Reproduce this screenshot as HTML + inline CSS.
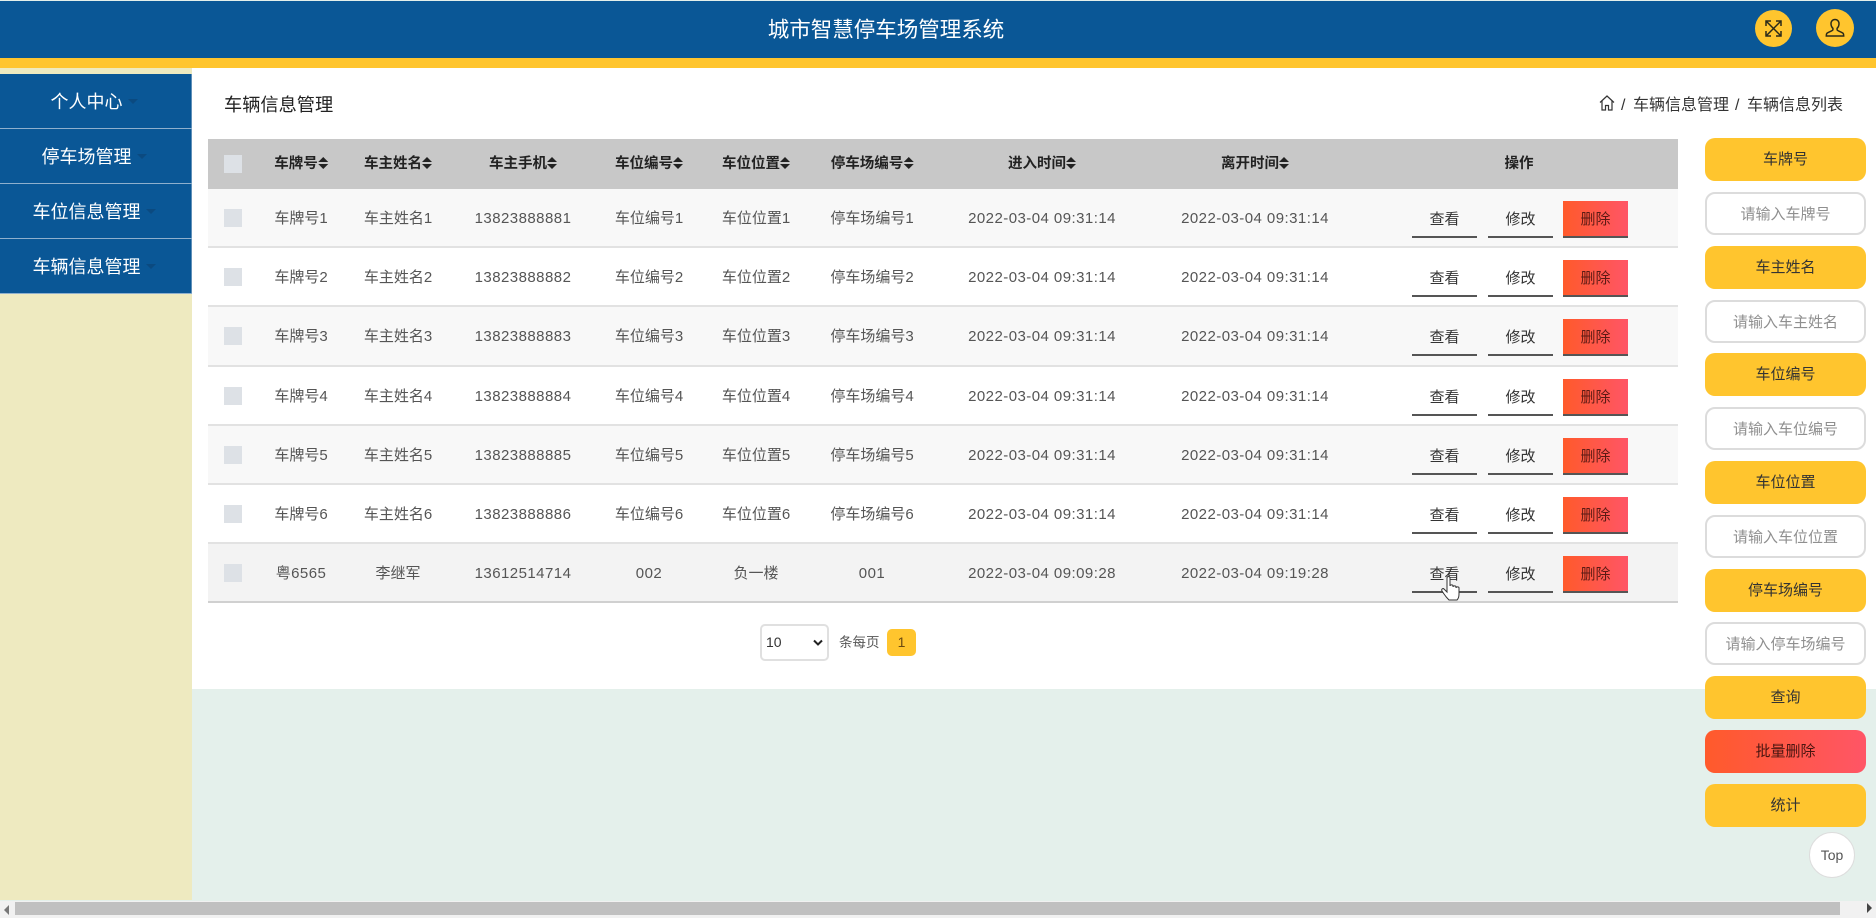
<!DOCTYPE html>
<html lang="zh">
<head>
<meta charset="utf-8">
<title>城市智慧停车场管理系统</title>
<style>
html,body{margin:0;padding:0;width:1876px;height:918px;overflow:hidden;background:#e4f0eb;font-family:"Liberation Sans","Noto Sans CJK SC",sans-serif;color:#333}
*{box-sizing:border-box}
.a{position:absolute}
.hd{left:0;top:1px;width:1876px;height:57px;background:#0a5796}
.yl{left:0;top:58px;width:1876px;height:10px;background:#ffc52e}
.title{left:0;top:15px;width:1772px;text-align:center;color:#fff;font-size:21.5px;line-height:30px}
.circ{border-radius:50%;background:#ffc52e;display:flex;align-items:center;justify-content:center}
.side{left:0;top:68px;width:192px;height:832px;background:#eeeac0}
.mi{left:0;width:192px;height:54px;background:#0a5796;color:#fff;font-size:18px;line-height:56px;text-align:center;border-right:1px solid #5f8fb8;padding-right:18px}
.mi i{position:absolute;width:0;height:0;border:5px solid transparent;border-top:5px solid #0b4a80;border-bottom:0;top:25px}
.sep{left:0;width:192px;height:1px;background:#8fb0cd}
.main{left:192px;top:68px;width:1684px;height:621px;background:#fff}
.h1{left:224px;top:91px;font-size:18.2px;line-height:28px;color:#222}
.bc{top:93px;font-size:16px;line-height:26px;color:#333;white-space:nowrap}
.thr{left:208px;top:139px;width:1470px;height:50px;background:#c8c8c8}
.r{left:208px;width:1470px;border-bottom:2px solid #e2e2e2}
.r .c,.thr .c{position:absolute;top:0;text-align:center;white-space:nowrap;font-size:15px;transform:translateX(-50%)}
.r .c{line-height:60px;color:#555}
.r .n{letter-spacing:.45px}
.thr .c{line-height:51px;font-weight:bold;color:#222;font-size:14.5px}
.cb{position:absolute;left:16px;width:18px;height:18px;background:#dde1e6;top:20px}
.thr .cb{top:16px}
.s{display:inline-block;width:10px;height:12px;position:relative;vertical-align:-1px;margin-left:0}
.s:before,.s:after{content:"";position:absolute;left:0;border:5px solid transparent}
.s:before{top:0;border-bottom:5px solid #222;border-top:0}
.s:after{bottom:0;border-top:5px solid #222;border-bottom:0}
.b{position:absolute;top:12px;height:37px;width:65px;text-align:center;line-height:37px;font-size:15px;color:#333;border-bottom:2px solid #555}
.b1{left:1204px}.b2{left:1280px}
.b3{left:1355px;background:linear-gradient(90deg,#ff5a2b,#ff5566);color:#5b1a14}
.pb{left:1705px;width:161px;height:43px;border-radius:10px;background:#ffc52e;text-align:center;line-height:44px;font-size:15px;color:#333}
.pi{left:1705px;width:161px;height:43px;border-radius:10px;background:#fff;border:2px solid #dcdcdc;text-align:center;line-height:41px;font-size:15px;color:#8f8f8f}
.red{background:linear-gradient(90deg,#ff5a2b,#ff5566);color:#4a1510}
</style>
</head>
<body>
<div class="a hd"></div>
<div class="a yl"></div>
<div class="a title">城市智慧停车场管理系统</div>
<div class="a circ" style="left:1755px;top:10px;width:37px;height:37px">
<svg width="19" height="19" viewBox="0 0 19 19" fill="none" stroke="#2a2a1a" stroke-width="1.5"><path d="M2 2L17 17M17 2L2 17"/><path d="M2 7V2H7M12 2H17V7M17 12V17H12M7 17H2V12"/></svg>
</div>
<div class="a circ" style="left:1816px;top:9px;width:38px;height:38px">
<svg width="20" height="20" viewBox="0 0 20 20" fill="none" stroke="#2a2a1a" stroke-width="1.5"><path d="M10 1.500c-2.600 0-4 2-4 4.200 0 2 .9 3.600 1.900 4.600v1.600c0 1-4.400 1.800-6 3.400-.6.700-.6 1.500-.6 2.700h17.400c0-1.200 0-2-.6-2.700-1.600-1.600-6-2.400-6-3.400v-1.600c1-1 1.900-2.600 1.900-4.600 0-2.200-1.400-4.200-4-4.200z"/></svg>
</div>

<div class="a side"></div>
<div class="a mi" style="top:74px">个人中心<i style="left:128px"></i></div>
<div class="a sep" style="top:128px"></div>
<div class="a mi" style="top:129px">停车场管理<i style="left:137px"></i></div>
<div class="a sep" style="top:183px"></div>
<div class="a mi" style="top:184px">车位信息管理<i style="left:146px"></i></div>
<div class="a sep" style="top:238px"></div>
<div class="a mi" style="top:239px">车辆信息管理<i style="left:146px"></i></div>
<div class="a sep" style="top:293px"></div>

<div class="a main"></div>
<div class="a h1">车辆信息管理</div>
<svg class="a" style="left:1599px;top:95px" width="16" height="16" viewBox="0 0 16 16" fill="none" stroke="#333" stroke-width="1.200"><path d="M1 7.500L8 1l7 6.500M3 6v9h3.500v-4.500h3V15H13V6"/></svg>
<div class="a bc" style="left:1621px">/</div>
<div class="a bc" style="left:1633px">车辆信息管理</div>
<div class="a bc" style="left:1735px">/</div>
<div class="a bc" style="left:1747px">车辆信息列表</div>

<div class="a thr">
<span class="cb"></span>
<span class="c" style="left:93px">车牌号<span class="s"></span></span>
<span class="c" style="left:190px">车主姓名<span class="s"></span></span>
<span class="c" style="left:315px">车主手机<span class="s"></span></span>
<span class="c" style="left:441px">车位编号<span class="s"></span></span>
<span class="c" style="left:548px">车位位置<span class="s"></span></span>
<span class="c" style="left:664px">停车场编号<span class="s"></span></span>
<span class="c" style="left:834px">进入时间<span class="s"></span></span>
<span class="c" style="left:1047px">离开时间<span class="s"></span></span>
<span class="c" style="left:1311px">操作</span>
</div>

<div class="a r" style="top:189px;height:59px;background:#f8f8f8">
<span class="cb"></span><span class="c" style="left:93px">车牌号1</span><span class="c" style="left:190px">车主姓名1</span><span class="c n" style="left:315px">13823888881</span><span class="c" style="left:441px">车位编号1</span><span class="c" style="left:548px">车位位置1</span><span class="c" style="left:664px">停车场编号1</span><span class="c n" style="left:834px">2022-03-04 09:31:14</span><span class="c n" style="left:1047px">2022-03-04 09:31:14</span>
<span class="b b1">查看</span><span class="b b2">修改</span><span class="b b3">删除</span>
</div>
<div class="a r" style="top:248px;height:59px;background:#fff">
<span class="cb"></span><span class="c" style="left:93px">车牌号2</span><span class="c" style="left:190px">车主姓名2</span><span class="c n" style="left:315px">13823888882</span><span class="c" style="left:441px">车位编号2</span><span class="c" style="left:548px">车位位置2</span><span class="c" style="left:664px">停车场编号2</span><span class="c n" style="left:834px">2022-03-04 09:31:14</span><span class="c n" style="left:1047px">2022-03-04 09:31:14</span>
<span class="b b1">查看</span><span class="b b2">修改</span><span class="b b3">删除</span>
</div>
<div class="a r" style="top:307px;height:60px;background:#f8f8f8">
<span class="cb"></span><span class="c" style="left:93px">车牌号3</span><span class="c" style="left:190px">车主姓名3</span><span class="c n" style="left:315px">13823888883</span><span class="c" style="left:441px">车位编号3</span><span class="c" style="left:548px">车位位置3</span><span class="c" style="left:664px">停车场编号3</span><span class="c n" style="left:834px">2022-03-04 09:31:14</span><span class="c n" style="left:1047px">2022-03-04 09:31:14</span>
<span class="b b1">查看</span><span class="b b2">修改</span><span class="b b3">删除</span>
</div>
<div class="a r" style="top:367px;height:59px;background:#fff">
<span class="cb"></span><span class="c" style="left:93px">车牌号4</span><span class="c" style="left:190px">车主姓名4</span><span class="c n" style="left:315px">13823888884</span><span class="c" style="left:441px">车位编号4</span><span class="c" style="left:548px">车位位置4</span><span class="c" style="left:664px">停车场编号4</span><span class="c n" style="left:834px">2022-03-04 09:31:14</span><span class="c n" style="left:1047px">2022-03-04 09:31:14</span>
<span class="b b1">查看</span><span class="b b2">修改</span><span class="b b3">删除</span>
</div>
<div class="a r" style="top:426px;height:59px;background:#f8f8f8">
<span class="cb"></span><span class="c" style="left:93px">车牌号5</span><span class="c" style="left:190px">车主姓名5</span><span class="c n" style="left:315px">13823888885</span><span class="c" style="left:441px">车位编号5</span><span class="c" style="left:548px">车位位置5</span><span class="c" style="left:664px">停车场编号5</span><span class="c n" style="left:834px">2022-03-04 09:31:14</span><span class="c n" style="left:1047px">2022-03-04 09:31:14</span>
<span class="b b1">查看</span><span class="b b2">修改</span><span class="b b3">删除</span>
</div>
<div class="a r" style="top:485px;height:59px;background:#fff">
<span class="cb"></span><span class="c" style="left:93px">车牌号6</span><span class="c" style="left:190px">车主姓名6</span><span class="c n" style="left:315px">13823888886</span><span class="c" style="left:441px">车位编号6</span><span class="c" style="left:548px">车位位置6</span><span class="c" style="left:664px">停车场编号6</span><span class="c n" style="left:834px">2022-03-04 09:31:14</span><span class="c n" style="left:1047px">2022-03-04 09:31:14</span>
<span class="b b1">查看</span><span class="b b2">修改</span><span class="b b3">删除</span>
</div>
<div class="a r" style="top:544px;height:59px;background:#f3f3f3;border-bottom-color:#d0d0d0">
<span class="cb"></span><span class="c n" style="left:93px">粤6565</span><span class="c" style="left:190px">李继军</span><span class="c n" style="left:315px">13612514714</span><span class="c n" style="left:441px">002</span><span class="c" style="left:548px">负一楼</span><span class="c n" style="left:664px">001</span><span class="c n" style="left:834px">2022-03-04 09:09:28</span><span class="c n" style="left:1047px">2022-03-04 09:19:28</span>
<span class="b b1">查看</span><span class="b b2">修改</span><span class="b b3">删除</span>
</div>

<svg class="a" style="left:1441px;top:575px" width="22" height="28" viewBox="0 0 22 28" fill="#fff" stroke="#333" stroke-width="1"><path d="M6 3c0-2 3-2 3 0v8c0-1.500 3-1.500 3 0v1c0-1.500 3-1.500 3 0v1c0-1.500 3-1.500 3 0v6c0 3-1 5-2 6H8c-1-1-3-3-5-6l-2-3c-1-2 1-3 2-2l3 3z"/></svg>

<div class="a" style="left:760px;top:624px;width:69px;height:37px;border:2px solid #e0e0e0;border-radius:5px;background:#fff;font-size:14px;line-height:33px;padding-left:4px;color:#333">10</div>
<svg class="a" style="left:813px;top:639px" width="10" height="8" viewBox="0 0 10 8" fill="none" stroke="#222" stroke-width="2"><path d="M1 1.500L5 5.500L9 1.500"/></svg>
<div class="a" style="left:839px;top:631px;font-size:13.500px;line-height:24px;color:#555">条每页</div>
<div class="a" style="left:887px;top:629px;width:29px;height:27px;background:#ffc52e;border-radius:5px;text-align:center;font-size:14px;line-height:27px;color:#6b4a10">1</div>

<div class="a pb" style="top:138px">车牌号</div>
<div class="a pi" style="top:192px">请输入车牌号</div>
<div class="a pb" style="top:246px">车主姓名</div>
<div class="a pi" style="top:300px">请输入车主姓名</div>
<div class="a pb" style="top:353px">车位编号</div>
<div class="a pi" style="top:407px">请输入车位编号</div>
<div class="a pb" style="top:461px">车位位置</div>
<div class="a pi" style="top:515px">请输入车位位置</div>
<div class="a pb" style="top:569px">停车场编号</div>
<div class="a pi" style="top:622px">请输入停车场编号</div>
<div class="a pb" style="top:676px">查询</div>
<div class="a pb red" style="top:730px">批量删除</div>
<div class="a pb" style="top:784px">统计</div>

<div class="a" style="left:1809px;top:832px;width:46px;height:46px;border-radius:50%;background:#fff;border:1px solid #ddd;text-align:center;line-height:44px;font-size:14px;color:#555">Top</div>

<div class="a" style="left:0;top:901px;width:1876px;height:17px;background:#f1f1f1"></div>
<div class="a" style="left:15px;top:902px;width:1825px;height:13px;background:#c0c0c0"></div>
<div class="a" style="left:4px;top:905px;width:0;height:0;border:5px solid transparent;border-right:5px solid #777;border-left:0"></div>
<div class="a" style="left:1867px;top:903px;width:0;height:0;border:5px solid transparent;border-left:5px solid #444;border-right:0"></div>
</body>
</html>
